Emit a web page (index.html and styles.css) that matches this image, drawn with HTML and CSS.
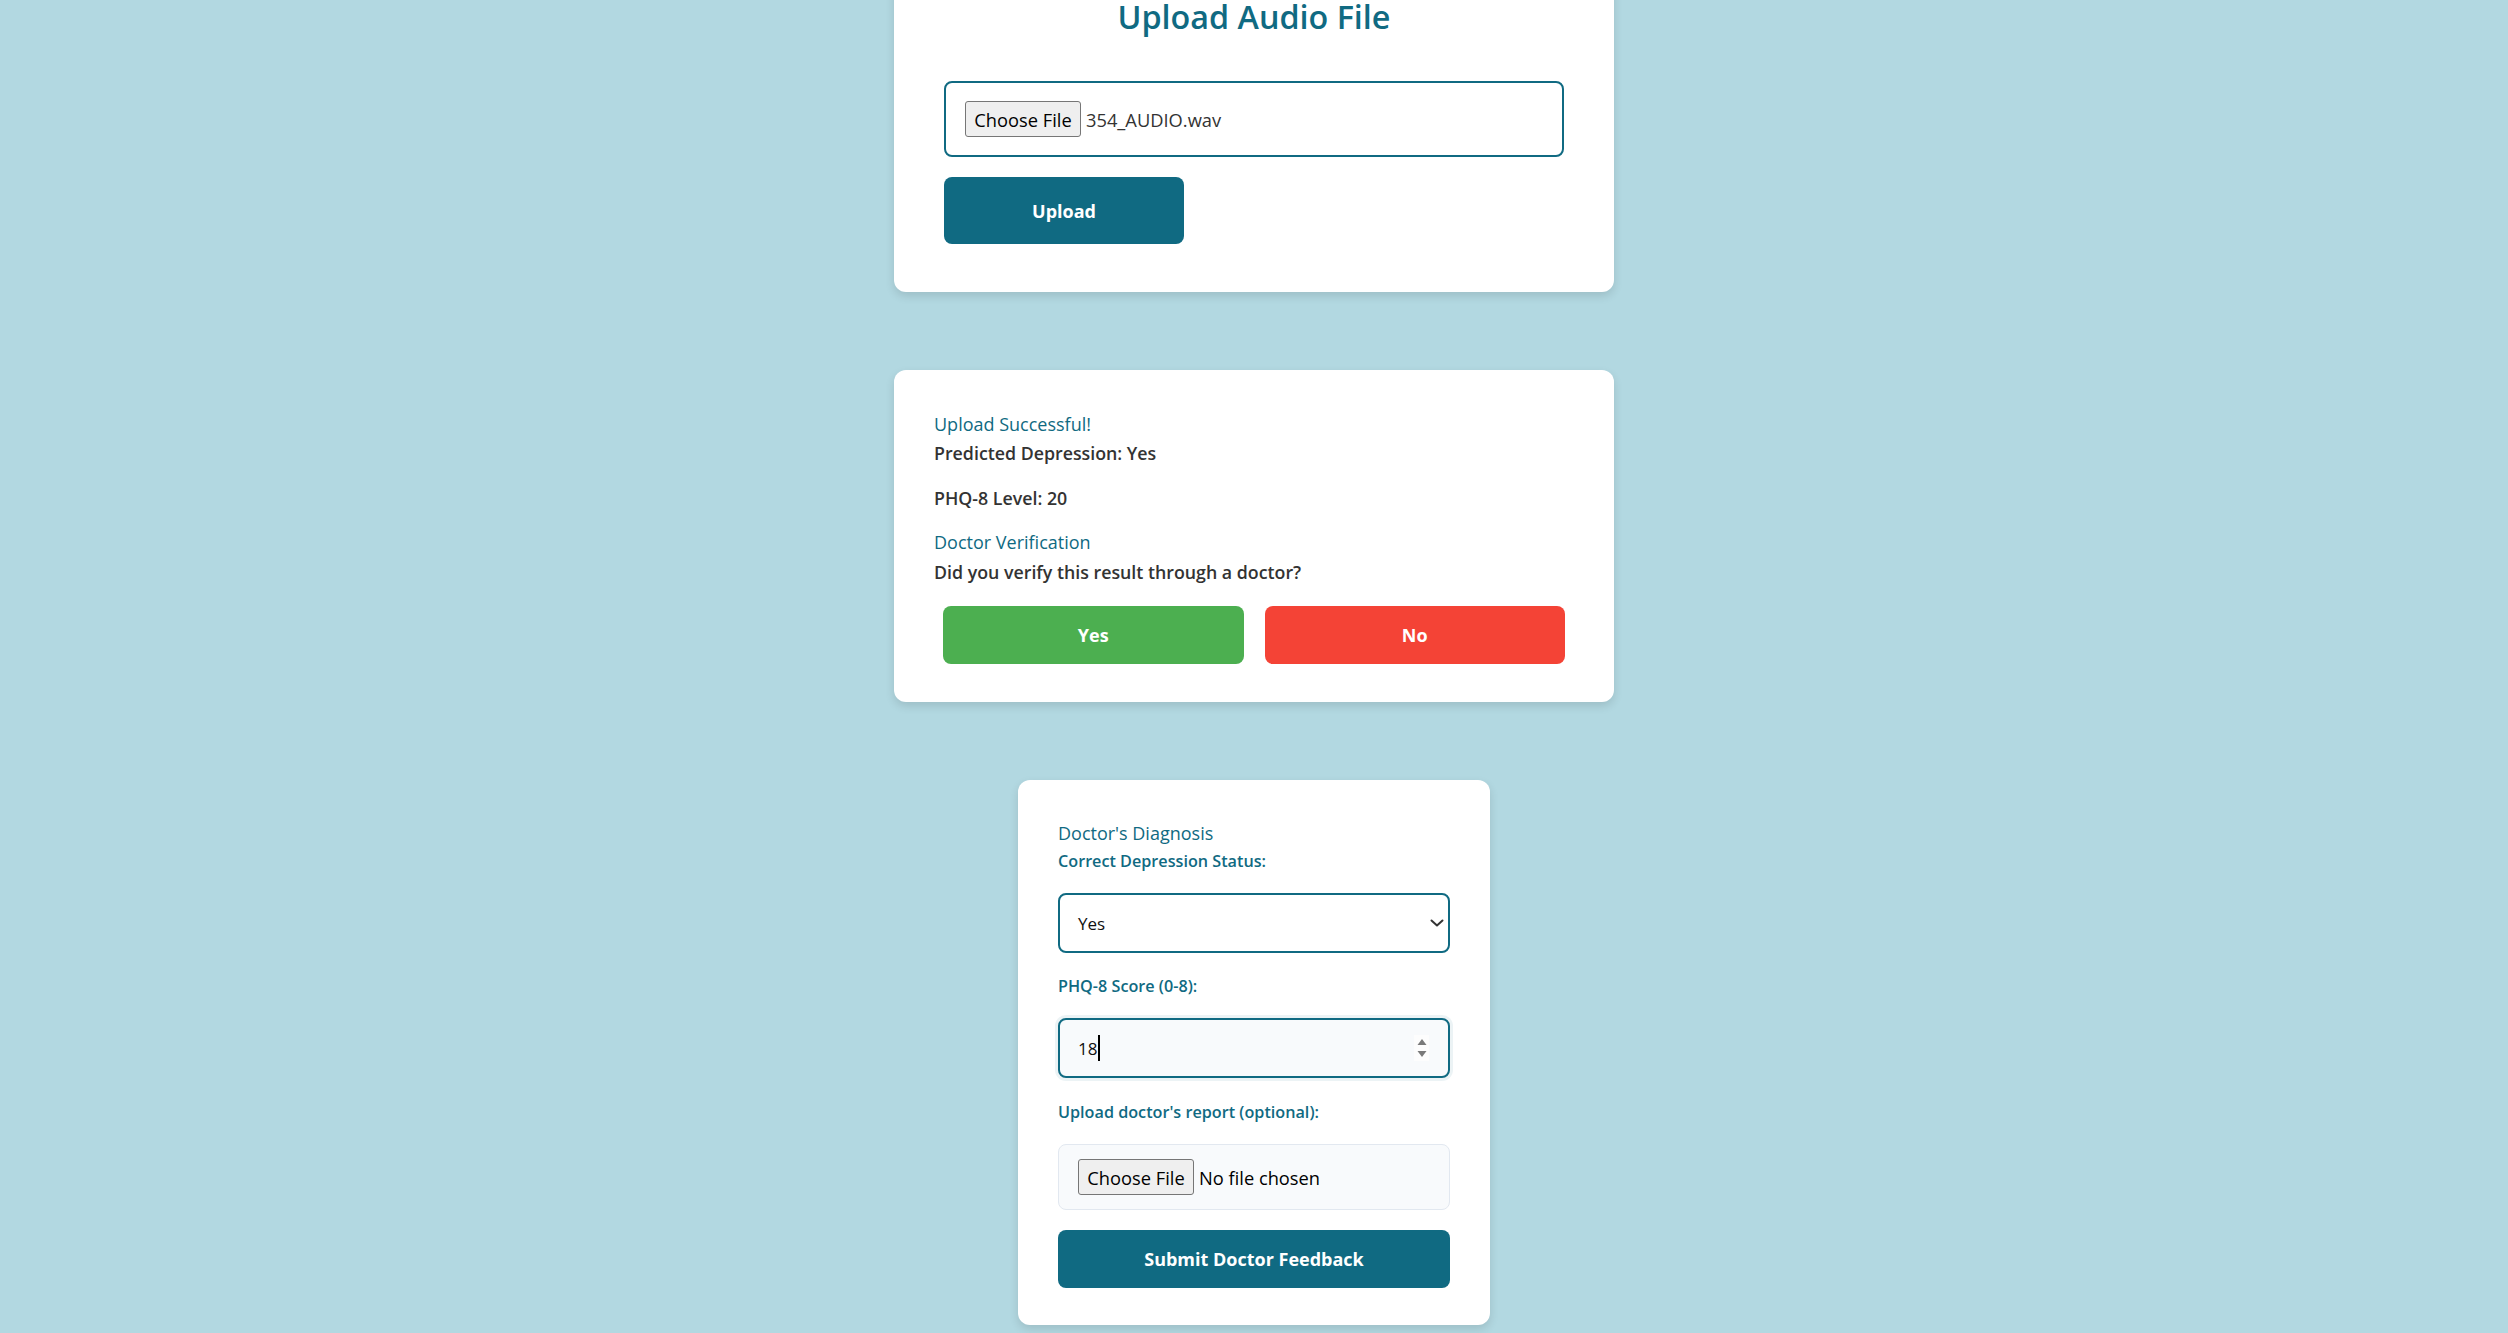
FILE: index.html
```html
<!DOCTYPE html>
<html lang="en">
<head>
<meta charset="utf-8">
<title>Depression Detection</title>
<link rel="stylesheet" href="styles.css">
</head>
<body>
<main class="page">
  <section class="card card-wide card-upload">
    <h2 class="title">Upload Audio File</h2>
    <div class="file-box file-box-accent">
      <span class="file-btn">Choose File</span>
      <span class="file-name">354_AUDIO.wav</span>
    </div>
    <button class="btn btn-primary btn-upload">Upload</button>
  </section>

  <section class="card card-wide card-result">
    <p class="status">Upload Successful!</p>
    <p class="result result-pred">Predicted Depression: Yes</p>
    <p class="result result-level">PHQ-8 Level: 20</p>
    <p class="status status-verify">Doctor Verification</p>
    <p class="result result-question">Did you verify this result through a doctor?</p>
    <div class="choice-row">
      <button class="btn btn-yes">Yes</button>
      <button class="btn btn-no">No</button>
    </div>
  </section>

  <section class="card card-doctor">
    <p class="status">Doctor's Diagnosis</p>
    <span class="field-label label-status">Correct Depression Status:</span>
    <div class="control select-box">
      <span class="control-value">Yes</span>
      <svg class="chevron" width="14" height="8" viewBox="0 0 14 8"><path d="M1.5 1.5 L7 6.5 L12.5 1.5" fill="none" stroke="#333" stroke-width="2" stroke-linecap="round" stroke-linejoin="round"/></svg>
    </div>
    <span class="field-label label-score">PHQ-8 Score (0-8):</span>
    <div class="control number-box">
      <span class="control-value">18</span><span class="caret"></span>
      <span class="spinner">
        <svg width="10" height="22" viewBox="0 0 10 22"><path d="M5 2 L9.5 8 L0.5 8 Z" fill="#7a7a7a"/><path d="M0.5 14 L9.5 14 L5 20 Z" fill="#7a7a7a"/></svg>
      </span>
    </div>
    <span class="field-label label-report">Upload doctor's report (optional):</span>
    <div class="file-box file-box-soft">
      <span class="file-btn">Choose File</span>
      <span class="file-name file-name-dark">No file chosen</span>
    </div>
    <button class="btn btn-primary btn-submit">Submit Doctor Feedback</button>
  </section>
</main>
</body>
</html>
```

FILE: styles.css
```css
html, body {
  margin: 0;
  height: 100%;
  overflow: hidden;
}

body {
  background: #b2d8e1;
  font-family: "Open Sans", "Noto Sans", sans-serif;
  color: #333;
}

.page {
  display: flex;
  flex-direction: column;
  align-items: center;
  gap: 78px;
  margin-top: -40px;
}

.card {
  background: #fff;
  border-radius: 12px;
  box-shadow: 0 4px 10px rgba(0, 0, 0, 0.12);
  box-sizing: border-box;
  display: flex;
  flex-direction: column;
}

.card-wide {
  width: 720px;
}

.card-upload {
  padding: 40px 40px 38px;
}

.title {
  margin: 0 0 39px;
  font-size: 32.3px;
  line-height: 32px;
  font-weight: 600;
  color: #106a82;
  text-align: center;
}

.file-box {
  display: flex;
  align-items: center;
  box-sizing: border-box;
  border-radius: 8px;
  padding: 0 19px;
}

.file-box-accent {
  margin: 10px;
  height: 76px;
  border: 2px solid #106a82;
  background: #fff;
}

.file-box-soft {
  margin-top: 22px;
  height: 66px;
  border: 1.5px solid #e2e8f0;
  background: #f8fafc;
}

.file-btn {
  box-sizing: border-box;
  height: 36px;
  width: 116px;
  display: flex;
  align-items: center;
  justify-content: center;
  background: #efefef;
  border: 1px solid #767676;
  border-radius: 3px;
  font-size: 18.3px;
  color: #000;
}

.file-name {
  margin-left: 5px;
  font-size: 18.3px;
  color: #333;
}

.file-name-dark {
  color: #000;
}

.btn {
  border: none;
  border-radius: 8px;
  color: #fff;
  font-family: inherit;
  font-weight: 700;
  font-size: 18px;
  padding: 0;
  cursor: pointer;
}

.btn-primary {
  background: #106a82;
}

.btn-upload {
  margin: 10px;
  width: 240px;
  height: 67px;
  align-self: flex-start;
}

.card-result {
  padding: 42px 40px 38px;
}

.status {
  margin: 0;
  font-size: 18px;
  line-height: 24px;
  color: #106a82;
}

.result {
  margin: 0;
  font-size: 17.8px;
  line-height: 22px;
  font-weight: 600;
  color: #333;
}

.result-pred {
  margin-top: 6px;
}

.result-level {
  margin-top: 23px;
}

.status-verify {
  margin-top: 21px;
}

.result-question {
  margin-top: 7px;
}

.choice-row {
  display: flex;
  gap: 21px;
  margin: 23px 9px 0;
}

.choice-row .btn {
  flex: 1;
  height: 58px;
}

.btn-yes {
  background: #4caf50;
}

.btn-no {
  background: #f44336;
}

.card-doctor {
  width: 472px;
  padding: 41px 40px 37px;
}

.field-label {
  display: block;
  font-size: 16.2px;
  line-height: 20px;
  font-weight: 600;
  color: #106a82;
}

.label-status {
  margin-top: 6px;
}

.label-score {
  margin-top: 23px;
}

.label-report {
  margin-top: 24px;
}

.control {
  margin-top: 22px;
  height: 60px;
  box-sizing: border-box;
  border: 2px solid #106a82;
  border-radius: 8px;
  display: flex;
  align-items: center;
  padding: 0 0 0 18px;
  font-size: 17px;
  color: #111;
}

.select-box {
  background: #fff;
}

.chevron {
  margin-left: auto;
  margin-right: 4px;
}

.number-box {
  background: #f8fafc;
  box-shadow: 0 0 0 3px rgba(16, 106, 130, 0.08);
}

.caret {
  display: inline-block;
  width: 2px;
  height: 26px;
  background: #000;
  margin-left: 1px;
}

.spinner {
  margin-left: auto;
  margin-right: 19px;
  width: 15px;
  height: 26px;
  background: #fdfdfd;
  display: flex;
  align-items: center;
  justify-content: center;
}

.btn-submit {
  margin-top: 20px;
  height: 58px;
  width: 100%;
}
```
